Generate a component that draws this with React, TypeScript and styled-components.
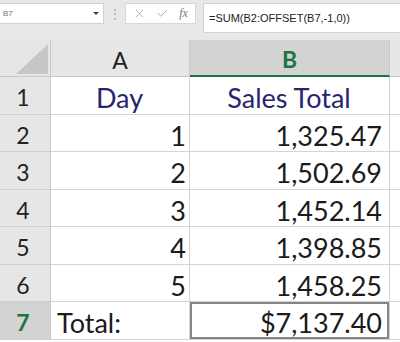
import { Fragment } from 'react';
import styled, { createGlobalStyle } from 'styled-components';
import { X, Check } from 'lucide-react';

const GlobalStyle = createGlobalStyle`
	html, body {
		margin: 0;
		padding: 0;
		background: #ffffff;
	}
`;

const Window = styled.div`
	width: 400px;
	height: 342px;
	overflow: hidden;
	display: flex;
	flex-direction: column;
	background: #ffffff;
	font-family: Lato, 'Open Sans', sans-serif;
`;

const FormulaBar = styled.div`
	height: 40px;
	flex: 0 0 40px;
	display: flex;
	align-items: flex-start;
	padding-top: 3px;
	box-sizing: border-box;
	background: #e8e8e8;
`;

const NameBox = styled.div`
	width: 104px;
	height: 21px;
	box-sizing: border-box;
	background: #ffffff;
	border: 1px solid #d0d0d0;
	border-left: 0;
	display: flex;
	align-items: center;
	justify-content: space-between;
	padding: 0 4px 0 3px;
	font-family: 'Liberation Sans', Arial, sans-serif;
	font-size: 8px;
	color: #707070;
`;

const DropArrow = styled.span`
	width: 0;
	height: 0;
	border-left: 3px solid transparent;
	border-right: 3px solid transparent;
	border-top: 3px solid #444444;
`;

const Grip = styled.div`
	width: 21px;
	height: 21px;
	display: flex;
	align-items: center;
	justify-content: center;
	color: #a8a8a8;
	font-size: 12px;
`;

const ButtonBox = styled.div`
	width: 71px;
	height: 21px;
	box-sizing: border-box;
	background: #ffffff;
	border: 1px solid #d8d8d8;
	display: flex;
	align-items: center;
	justify-content: space-around;
	padding: 0 2px;
	color: #a0a0a0;
`;

const FxLabel = styled.span`
	font-family: 'Liberation Serif', serif;
	font-style: italic;
	font-size: 12px;
	color: #7a7a7a;
`;

const FormulaInput = styled.div`
	flex: 1;
	height: 30px;
	margin-left: 7px;
	box-sizing: border-box;
	background: #ffffff;
	border: 1px solid #d4d4d4;
	border-right: 0;
	display: flex;
	align-items: center;
	padding-left: 5px;
	font-family: 'Liberation Sans', Arial, sans-serif;
	font-size: 11px;
	color: #222222;
`;

const Sheet = styled.div`
	display: grid;
	grid-template-columns: 51px 139px 200px 1fr;
	grid-template-rows: 37px repeat(7, 37.5px);
`;

const Corner = styled.div`
	background: #e6e6e6;
	border-right: 1px solid #c9c9c9;
	border-bottom: 1px solid #c9c9c9;
	display: flex;
	align-items: flex-end;
	justify-content: flex-end;
	padding: 0 2px 2px 0;
`;

const ColHeader = styled.div<{ $selected?: boolean }>`
	background: ${(p) => (p.$selected ? '#d3d3d3' : '#e6e6e6')};
	border-right: 1px solid #c9c9c9;
	border-bottom: ${(p) => (p.$selected ? '2px solid #217346' : '1px solid #c9c9c9')};
	display: flex;
	align-items: center;
	justify-content: center;
	padding-top: 3px;
	font-size: 23px;
	font-weight: ${(p) => (p.$selected ? 700 : 400)};
	color: ${(p) => (p.$selected ? '#217346' : '#222222')};
`;

const RowHeader = styled.div<{ $selected?: boolean }>`
	background: ${(p) => (p.$selected ? '#d3d3d3' : '#e6e6e6')};
	border-right: 1px solid #c9c9c9;
	border-bottom: 1px solid #d0d0d0;
	display: flex;
	align-items: center;
	justify-content: center;
	padding: 4px 4px 0 0;
	font-size: 23px;
	font-weight: ${(p) => (p.$selected ? 700 : 400)};
	color: ${(p) => (p.$selected ? '#217346' : '#222222')};
`;

type Align = 'left' | 'center' | 'right';

const Cell = styled.div<{ $align?: Align; $title?: boolean; $active?: boolean; $inset?: number }>`
	border-right: 1px solid #d4d4d4;
	border-bottom: 1px solid #d4d4d4;
	display: flex;
	align-items: center;
	justify-content: ${(p) =>
		p.$align === 'left' ? 'flex-start' : p.$align === 'center' ? 'center' : 'flex-end'};
	padding: 5px ${(p) => p.$inset ?? 7}px 0 6px;
	font-size: 27px;
	color: ${(p) => (p.$title ? '#27256e' : '#1b1b1b')};
	white-space: nowrap;
	overflow: hidden;
	${(p) => p.$active && `box-shadow: inset 0 0 0 2px #858585;`}
`;

const rows = [
	{ day: '1', total: '1,325.47' },
	{ day: '2', total: '1,502.69' },
	{ day: '3', total: '1,452.14' },
	{ day: '4', total: '1,398.85' },
	{ day: '5', total: '1,458.25' },
];

export default function App() {
	return (
		<>
			<GlobalStyle />
			<Window>
				<FormulaBar>
					<NameBox>
						<span>B7</span>
						<DropArrow />
					</NameBox>
					<Grip>⋮</Grip>
					<ButtonBox>
						<X size={13} strokeWidth={1.4} />
						<Check size={13} strokeWidth={1.6} />
						<FxLabel>fx</FxLabel>
					</ButtonBox>
					<FormulaInput>=SUM(B2:OFFSET(B7,-1,0))</FormulaInput>
				</FormulaBar>
				<Sheet>
					<Corner>
						<svg width="32" height="30" viewBox="0 0 32 30">
							<polygon points="0,30 32,30 32,0" fill="#c6c6c6" />
						</svg>
					</Corner>
					<ColHeader>A</ColHeader>
					<ColHeader $selected>B</ColHeader>
					<ColHeader />

					<RowHeader>1</RowHeader>
					<Cell $align="center" $title>Day</Cell>
					<Cell $align="center" $title>Sales Total</Cell>
					<Cell />

					{rows.map((r, i) => (
						<Fragment key={i}>
							<RowHeader>{i + 2}</RowHeader>
							<Cell $inset={3}>{r.day}</Cell>
							<Cell>{r.total}</Cell>
							<Cell />
						</Fragment>
					))}

					<RowHeader $selected>7</RowHeader>
					<Cell $align="left">Total:</Cell>
					<Cell $active>$7,137.40</Cell>
					<Cell />
				</Sheet>
			</Window>
		</>
	);
}
